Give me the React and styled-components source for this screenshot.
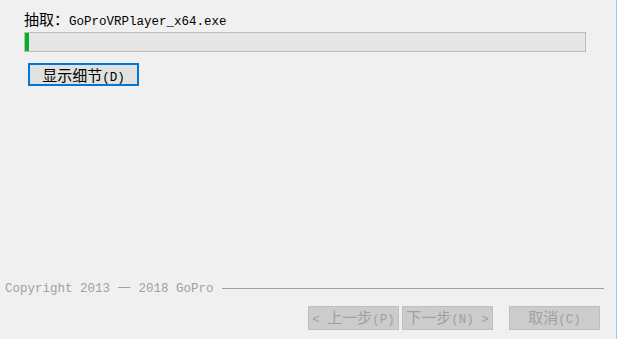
import React from "react";
import styled, { createGlobalStyle } from "styled-components";

const GlobalStyle = createGlobalStyle`
  html, body {
    margin: 0;
    padding: 0;
    background: #f0f0f0;
  }
`;

const Window = styled.div`
  box-sizing: border-box;
  width: 617px;
  height: 339px;
  display: flex;
  flex-direction: column;
  background: #f0f0f0;
  border-right: 1px solid #99c9ef;
  font-family: "Liberation Mono", "Noto Sans CJK SC", monospace;
  font-size: 12.5px;
  color: #000;
`;

const Main = styled.div`
  padding: 9px 30px 0 24px;
  display: flex;
  flex-direction: column;
`;

const Line = styled.div`
  height: 20px;
  line-height: 20px;
  white-space: nowrap;
  padding-left: ${(p) => p.$indent || 0}px;
`;

const Wide = styled.span`
  font-family: "Noto Sans CJK SC", sans-serif;
  font-size: 15px;
  line-height: 20px;
`;

const Progress = styled.div`
  box-sizing: border-box;
  height: 20px;
  margin-top: 3px;
  border: 1px solid #bcbcbc;
  background: #e6e6e6;
  padding: 0 0 0 0;
`;

const Fill = styled.div`
  height: 100%;
  background: #06b025;
`;

const DetailsButton = styled.button`
  box-sizing: border-box;
  align-self: flex-start;
  margin: 11px 0 0 4px;
  width: 111px;
  height: 23px;
  padding: 0;
  border: 2px solid #0078d7;
  background: #e1e1e1;
  font: inherit;
  color: #000;
  line-height: 18px;
`;

const Footer = styled.div`
  margin-top: auto;
  display: flex;
  flex-direction: column;
  padding-bottom: 9px;
`;

const CopyrightRow = styled.div`
  display: flex;
  align-items: center;
  gap: 9px;
  padding: 0 12px 0 5px;
  color: #a0a0a0;
`;

const Rule = styled.div`
  flex: 1;
  height: 1px;
  margin-top: 5px;
  background: #a0a0a0;
`;

const ButtonRow = styled.div`
  display: flex;
  justify-content: flex-end;
  gap: 3px;
  padding-right: 16px;
  margin-top: 10px;
`;

const NavButton = styled.button`
  box-sizing: border-box;
  width: 91px;
  height: 24px;
  padding: 0;
  margin-left: ${(p) => p.$gap || 0}px;
  border: 1px solid #bfbfbf;
  background: #cccccc;
  color: #a0a0a0;
  font: inherit;
  line-height: 20px;
  white-space: nowrap;
`;

export default function App() {
  const progress = 4;

  return (
    <>
      <GlobalStyle />
      <Window>
        <Main>
          <Line>
            <Wide>抽取：</Wide>GoProVRPlayer_x64.exe
          </Line>
          <Progress>
            <Fill style={{ width: progress }} />
          </Progress>
          <DetailsButton>
            <Wide>显示细节</Wide>(D)
          </DetailsButton>
        </Main>
        <Footer>
          <CopyrightRow>
            <Line>
              Copyright 2013 <Wide>—</Wide> 2018 GoPro
            </Line>
            <Rule />
          </CopyrightRow>
          <ButtonRow>
            <NavButton disabled>
              &lt; <Wide>上一步</Wide>(P)
            </NavButton>
            <NavButton disabled>
              <Wide>下一步</Wide>(N) &gt;
            </NavButton>
            <NavButton disabled $gap={13}>
              <Wide>取消</Wide>(C)
            </NavButton>
          </ButtonRow>
        </Footer>
      </Window>
    </>
  );
}
